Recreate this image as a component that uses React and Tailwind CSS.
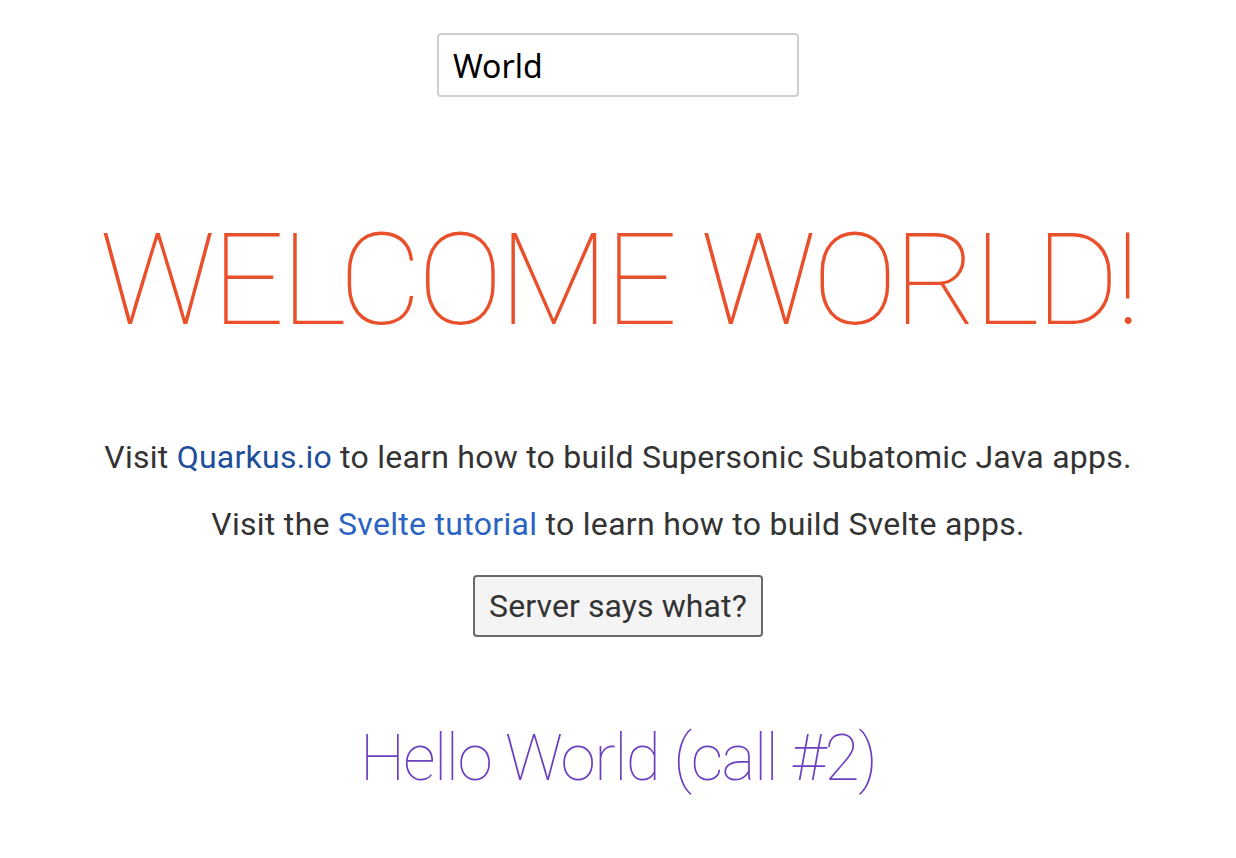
export default function App() {
  return (
    <div className="min-h-[858px] w-full bg-white flex flex-col items-center text-[#333] font-['Roboto',sans-serif]">
      <input
        defaultValue="World"
        className="mt-[33px] w-[362px] h-[64px] border-2 border-[#cfcfcf] rounded-[4px] px-[14px] text-[32px] text-black outline-none font-['Noto_Sans',sans-serif]"
      />
      <h1 className="mt-[119px] text-[128px] leading-none font-thin text-[#ea4f2b] uppercase whitespace-nowrap tracking-[-3.95px]">
        Welcome World!
      </h1>
      <p className="mt-[93px] text-[32px] leading-[40px] tracking-[0.25px]">
        Visit <a className="text-[#1e4f9c]">Quarkus.io</a> to learn how to build Supersonic Subatomic Java apps.
      </p>
      <p className="mt-[27px] text-[32px] leading-[40px] tracking-[0.3px]">
        Visit the <a className="text-[#2a63c2]">Svelte tutorial</a> to learn how to build Svelte apps.
      </p>
      <button className="mt-[31px] h-[62px] px-[14px] border-2 border-[#6a6a6a] rounded-[4px] bg-[#f4f4f4] text-[32px] text-[#333] tracking-[0.1px]">
        Server says what?
      </button>
      <div className="mt-[90px] text-[64px] leading-none font-thin text-[#6b3fbf] tracking-[-1.5px]">
        Hello World (call #2)
      </div>
    </div>
  );
}
